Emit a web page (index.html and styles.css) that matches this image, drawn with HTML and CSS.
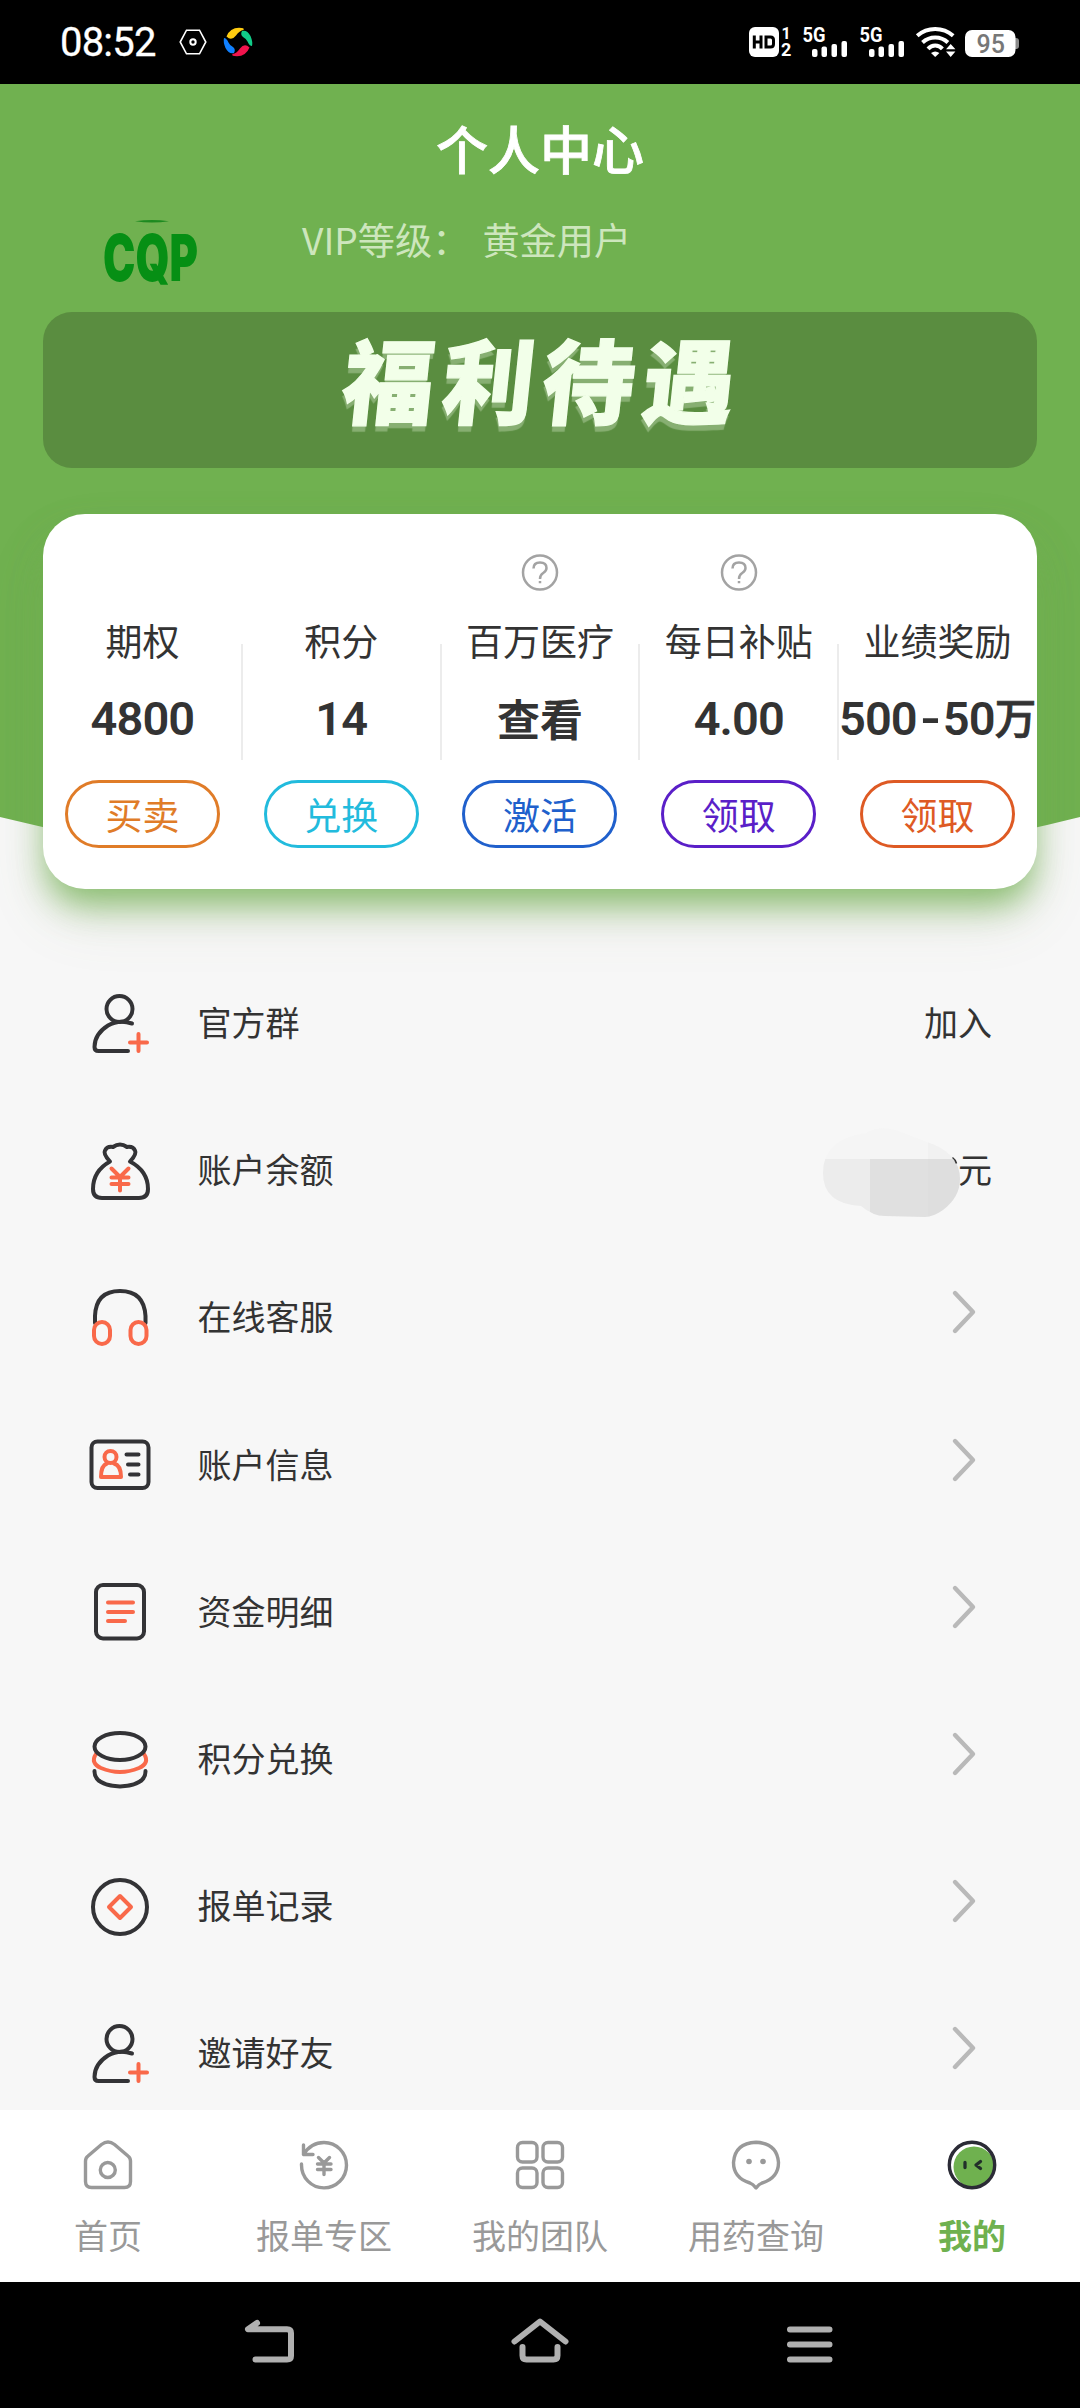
FILE: index.html
```html
<!DOCTYPE html>
<html lang="zh-CN">
<head>
<meta charset="utf-8">
<title>个人中心</title>
<link rel="stylesheet" href="styles.css">
</head>
<body>
<div class="phone">
  <div class="status">
    <span class="clock">08:52</span>
    <svg class="st-hex" width="28" height="26" viewBox="0 0 28 26" fill="none" stroke="#fff" stroke-width="1.6"><path d="M7.5 1.2h13L26.8 13l-6.3 11.8h-13L1.2 13z"/><circle cx="14" cy="13" r="2.7" stroke-width="2"/></svg>
    <svg class="st-swirl" width="30" height="30" viewBox="0 0 30 30"><path d="M3.500 9.500Q7 .8 16 .8q6 0 4.500 2.200-4 .5-7.500 5.500-4.500 6-9.500 1z" fill="#fc1"/><path d="M19 4q5-1.500 8.500 5 2.500 6 1.500 10-2.500 0-4.500-4.500-1-2.500-4.500-4.500-3-2.500-1-6z" fill="#1c8"/><path d="M26.500 20.500q-3.500 8.700-12.500 8.700-6 0-4.500-2.200 4-.5 7.500-5.500 4.500-6 9.500-1z" fill="#f1144d"/><path d="M11 26q-5 1.500-8.500-5Q0 15 1 11q2.500 0 4.500 4.500 1 2.500 4.500 4.500 3 2.500 1 6z" fill="#1080ff"/></svg>
    <span class="grow"></span>
    <svg class="st-hd" width="43" height="30" viewBox="0 0 43 30"><rect width="30" height="30" rx="6" fill="#fff"/><path d="M5.300 8.500v13M12 8.500v13M5.300 15H12M17 10h4.500q3 0 3 3v4q0 3-3 3H17z" fill="none" stroke="#000" stroke-width="3"/><text x="32.500" y="12" class="tiny">1</text><text x="32" y="29" class="small">2</text></svg>
    <svg class="st-sig" width="45" height="30" viewBox="0 0 45 30" fill="#fff"><text x="-.5" y="14.500" class="gen" textLength="23" lengthAdjust="spacingAndGlyphs">5G</text><rect x="9" y="22" width="5.500" height="8" rx="2"/><rect x="18.500" y="19.500" width="5.500" height="10.500" rx="2"/><rect x="28.500" y="17" width="5.500" height="13" rx="2"/><rect x="38.500" y="14" width="5.500" height="16" rx="2"/></svg>
    <svg class="st-sig2" width="45" height="30" viewBox="0 0 45 30" fill="#fff"><text x="-.5" y="14.500" class="gen" textLength="23" lengthAdjust="spacingAndGlyphs">5G</text><rect x="9" y="22" width="5.500" height="8" rx="2"/><rect x="18.500" y="19.500" width="5.500" height="10.500" rx="2"/><rect x="28.500" y="17" width="5.500" height="13" rx="2"/><rect x="38.500" y="14" width="5.500" height="16" rx="2"/></svg>
    <svg class="st-wifi" width="40" height="30" viewBox="0 0 40 30"><g fill="none" stroke="#fff" stroke-width="4"><path d="M1.200 8.800Q9 2 19.200 2t18 6.800"/><path d="M6.500 15.500Q12 10.500 19.200 10.500t12.700 5"/><path d="M12 21.800q3-3.300 7.200-3.300t7.200 3.300"/></g><path d="M15 26q4.200-3 8.400 0L19.200 30z" fill="#fff"/><path d="M30 22.300l4.700-5.300 4.700 5.300zM30 24.500l4.700 5.500 4.700-5.500z" fill="#fff"/></svg>
    <svg class="st-bat" width="55" height="27" viewBox="0 0 55 27"><rect x="46" y="8" width="8" height="11" rx="3" fill="#8a8a8a"/><rect width="50.500" height="27" rx="7" fill="#fff"/><text x="25.800" y="22.500" text-anchor="middle" class="pct">95</text></svg>
  </div>

  <main class="content">
    <h1 class="title">个人中心</h1>
    <div class="profile">
      <svg class="logo" width="100" height="74" viewBox="0 0 100 74"><path d="M32 9.200q17-2.600 34 0-17 2.600-34 0z" fill="#1d8a20"/><text x="0" y="69" class="logo-text" textLength="95" lengthAdjust="spacingAndGlyphs">CQP</text></svg>
      <p class="vip"><span>VIP等级：</span><span>黄金用户</span></p>
    </div>
    <div class="banner"><span>福利待遇</span></div>

    <section class="card">
      <div class="col">
        <div class="help"></div><div class="mid"><div class="label">期权</div><div class="value">4800</div></div><button class="pill orange">买卖</button>
      </div>
      <div class="col">
        <div class="help"></div><div class="mid"><div class="label">积分</div><div class="value">14</div></div><button class="pill cyan">兑换</button>
      </div>
      <div class="col">
        <div class="help"><svg width="38" height="38" viewBox="0 0 38 38" fill="none" stroke="#a3a3a3" stroke-width="2.500"><circle cx="19" cy="19.500" r="17"/><path d="M12.500 15.500q0-6 6.500-6t6.500 5.500q0 3-3.300 5Q19 22 19 26M19 28v2.300"/></svg></div><div class="mid"><div class="label">百万医疗</div><div class="value zh">查看</div></div><button class="pill blue">激活</button>
      </div>
      <div class="col">
        <div class="help"><svg width="38" height="38" viewBox="0 0 38 38" fill="none" stroke="#a3a3a3" stroke-width="2.500"><circle cx="19" cy="19.500" r="17"/><path d="M12.500 15.500q0-6 6.500-6t6.500 5.500q0 3-3.300 5Q19 22 19 26M19 28v2.300"/></svg></div><div class="mid"><div class="label">每日补贴</div><div class="value">4.00</div></div><button class="pill purple">领取</button>
      </div>
      <div class="col">
        <div class="help"></div><div class="mid"><div class="label">业绩奖励</div><div class="value">500<span class="dash">-</span>50<span class="wan">万</span></div></div><button class="pill red">领取</button>
      </div>
    </section>

    <ul class="menu">
      <li><svg class="ico" viewBox="0 0 64 64"><circle cx="31.500" cy="17" r="13"/><path d="M44 31.500Q31 27 20 33.500 6.500 42 6.500 55q0 4 4 4H40"/><path class="hot" d="M42 50.500h17M50.500 42v17"/></svg><span>官方群</span><em>加入</em></li>
      <li><svg class="ico" viewBox="0 0 64 64"><path d="M22 22.500Q15 15 17 11.500 19 7 25 8q7-5 14 0 6-1 8 3.500 2 3.500-5 11Q60 32 60 50q0 9-9 9H14q-9 0-9-9 0-18 17-27.500z"/><path class="hot" d="M23.500 29.500l8.500 8.500 8.500-8.500M23.500 38.500h17M23.500 45h17M32 38.500v13"/></svg><span>账户余额</span>
        <em class="balance">元<svg class="mask" width="138" height="92" viewBox="0 0 138 92"><clipPath id="blob"><path d="M0 46Q0 12 43 6 58-3 78 5L104 15Q137 26 137 52 137 70 120 83 110 90 102 90L62 89Q50 89 38 79 0 77 0 46z"/></clipPath><g clip-path="url(#blob)"><rect width="138" height="92" fill="#f5f5f5"/><path d="M0 32h47v60H0z" fill="#ececec"/><path d="M105 0h33v32h-33z" fill="#f1f1f1"/><path d="M47 32h58v60H47z" fill="#e0e0e0"/><path d="M105 32h33v60h-33z" fill="#dedede"/></g><path d="M129.500 30.500q3 2 4 6" fill="none" stroke="#333" stroke-width="1.500"/></svg></em></li>
      <li><svg class="ico" viewBox="0 0 64 64"><path d="M7 37V30Q8 5 32 5t25.500 25v7"/><rect class="hot" x="6" y="36" width="16" height="22" rx="8"/><rect class="hot" x="42.500" y="36" width="16" height="22" rx="8"/></svg><span>在线客服</span><svg class="chev" viewBox="0 0 26 46"><path d="M4 4l18 19L4 42"/></svg></li>
      <li><svg class="ico" viewBox="0 0 64 64"><rect x="3.500" y="8.500" width="57" height="46.500" rx="6"/><circle class="hot" cx="22.500" cy="24" r="6"/><path class="hot" d="M19 30.500q-6 2-6 13.500h20q0-11.500-7-13.500"/><path d="M38.500 21.500h12M40 31.500h10.500M42 41.500h8.500"/></svg><span>账户信息</span><svg class="chev" viewBox="0 0 26 46"><path d="M4 4l18 19L4 42"/></svg></li>
      <li><svg class="ico" viewBox="0 0 64 64"><rect x="8" y="5" width="48" height="53.500" rx="7"/><path class="hot" d="M20 22.500h25M20 32h25M20 41h17"/></svg><span>资金明细</span><svg class="chev" viewBox="0 0 26 46"><path d="M4 4l18 19L4 42"/></svg></li>
      <li><svg class="ico" viewBox="0 0 64 64"><path d="M6.500 43Q6 57 32 58.500 58 57 57.500 43"/><path class="hot" d="M8 26q-6 9 5 14 19 8 38 0 11-5 5-14"/><ellipse cx="32" cy="18.500" rx="25.500" ry="13.500"/></svg><span>积分兑换</span><svg class="chev" viewBox="0 0 26 46"><path d="M4 4l18 19L4 42"/></svg></li>
      <li><svg class="ico" viewBox="0 0 64 64"><circle cx="32" cy="32" r="27"/><path class="hot" d="M32 21l11 11-11 11-11-11z"/></svg><span>报单记录</span><svg class="chev" viewBox="0 0 26 46"><path d="M4 4l18 19L4 42"/></svg></li>
      <li><svg class="ico" viewBox="0 0 64 64"><circle cx="31.500" cy="17" r="13"/><path d="M44 31.500Q31 27 20 33.500 6.500 42 6.500 55q0 4 4 4H40"/><path class="hot" d="M42 50.500h17M50.500 42v17"/></svg><span>邀请好友</span><svg class="chev" viewBox="0 0 26 46"><path d="M4 4l18 19L4 42"/></svg></li>
    </ul>
  </main>

  <nav class="tabs">
    <a><svg viewBox="0 0 50 50"><path d="M2.500 21q0-3 2.500-5L18.500 4.500q6.500-5 13 0L45 16q2.500 2 2.500 5v20.500q0 6-6 6h-33q-6 0-6-6z"/><circle cx="24.800" cy="30" r="7.500"/></svg><span>首页</span></a>
    <a><svg viewBox="0 0 50 50"><path d="M4.500 14.500Q12 2.500 25 2.500A22.500 22.700 0 1 1 2.500 25v-1M4.500 5v9.500H14"/><path d="M19.500 17.500l5.500 5.500 5.500-5.500M18.500 24h13.500M18.500 29.500h13.500M25 24v10.500"/></svg><span>报单专区</span></a>
    <a><svg viewBox="0 0 50 50"><rect x="2.500" y="2.500" width="19.500" height="19.500" rx="5"/><rect x="28" y="2.500" width="19.500" height="19.500" rx="5"/><rect x="2.500" y="28" width="19.500" height="19.500" rx="5"/><rect x="28" y="28" width="19.500" height="19.500" rx="5"/></svg><span>我的团队</span></a>
    <a><svg viewBox="0 0 50 50"><path d="M19 43Q2.500 38 2.500 22.500 4 3 25 2.300 46 3 47.500 22.500 47.500 38 31 43q-3 1-6 5-3-4-6-5z"/><circle class="dot" cx="18" cy="21.500" r="2.800"/><circle class="dot" cx="32" cy="21.500" r="2.800"/></svg><span>用药查询</span></a>
    <a class="on"><svg viewBox="0 0 50 50"><circle cx="25" cy="25" r="22.500" fill="#fff" stroke="none"/><circle cx="27" cy="27" r="20.500" fill="#6fb14f" stroke="none"/><circle cx="25" cy="25" r="22.700" stroke="#2b2b36"/><path d="M18 22.500v5M33.500 21.500L29 25l4.500 3.500" stroke="#22302a" stroke-width="3.300"/></svg><span>我的</span></a>
  </nav>

  <div class="keys">
    <svg viewBox="0 0 60 50"><path d="M17 6L8 12.200H47Q51 12.200 51 16V39q0 3.500-4 3.500H15.500"/></svg>
    <svg viewBox="0 0 60 50"><path d="M4.500 24.500L30 4.500l25.500 20M12.500 30v8.500q0 4 4 4h27q4 0 4-4V30"/></svg>
    <svg viewBox="0 0 60 50"><path d="M10 12.500h39.500M10 27.500h39.500M10 42.500h39.500"/></svg>
  </div>
</div>
</body>
</html>
```
FILE: styles.css
```css
* { box-sizing: border-box; }
body, h1, p, ul { margin: 0; padding: 0; }
body { font-family: "Noto Sans CJK SC", Roboto, sans-serif; color: #333; background: #f7f7f7; }
svg { overflow: visible; }
.phone { width: 1080px; height: 2408px; display: flex; flex-direction: column; overflow: hidden; }

.status { height: 84px; flex: none; background: #000; display: flex; align-items: center; padding: 0 60px; }
.clock { font: 400 40px/84px Roboto, sans-serif; color: #fff; width: 119px; height: 82px; letter-spacing: -0.8px; -webkit-text-stroke: 0.3px #fff; }
.st-swirl { margin-left: 16px; }
.grow { flex: 1; }
.st-hd { margin-right: 11px; }
.st-sig { margin-right: 12px; }
.st-sig2 { margin-right: 11px; }
.st-wifi { margin-right: 9px; }
.st-bat { margin: 3px 0 0 0; }
.tiny { font: 700 16px Roboto, sans-serif; fill: #fff; }
.small { font: 700 18px Roboto, sans-serif; fill: #fff; }
.gen { font: 700 20px Roboto, sans-serif; }
.pct { font: 500 25px Roboto, sans-serif; fill: #777; }

.content { flex: 1; min-height: 0; overflow: hidden; position: relative; z-index: 0; }
.content::before { content: ""; position: absolute; z-index: -1; inset: 0 0 auto 0; height: 820px; background: #70b150; clip-path: path("M0 0H1080V733Q540 868 0 733Z"); }
.title { height: 128px; text-align: center; color: #fff; font-size: 52px; line-height: 128px; font-weight: 500; -webkit-text-stroke: 0.8px #fff; }
.profile { display: flex; height: 100px; padding-left: 103px; }
.logo { flex: none; }
.logo-text { font: 900 65px Inter, sans-serif; fill: #068f14; }
.vip { display: flex; gap: 13px; margin-left: 99px; font-size: 37.2px; line-height: 55px; color: #cde6bd; font-weight: 400; }
.banner { width: 994px; height: 156px; margin: 0 auto 46px; border-radius: 29px; background: #5a8d40; display: flex; justify-content: center; }
.banner span { font-size: 92px; line-height: 130px; font-weight: 900; letter-spacing: 8px; padding-left: 4px; color: #f2ffe9; transform: skewX(-6deg); -webkit-text-stroke: 1.3px #f2ffe9; text-shadow: 0 6px 1px rgba(242, 255, 233, .3); }

.card { width: 994px; height: 375px; margin: 0 auto; background: #fff; border-radius: 42px; display: grid; grid-template-columns: repeat(5, minmax(0, 1fr)); box-shadow: 0 20px 34px -4px rgba(112, 177, 80, .8), 0 30px 60px rgba(120, 130, 90, .12); }
.col { display: flex; flex-direction: column; align-items: center; padding-top: 39px; position: relative; }
.col:not(:last-child)::after { content: ""; position: absolute; right: -1px; top: 130px; width: 2px; height: 116px; background: #ececec; }
.help { height: 38px; }
.help svg { display: block; }
.mid { height: 189px; display: flex; flex-direction: column; align-items: center; padding-top: 22px; }
.label { font-size: 37px; line-height: 54px; white-space: nowrap; font-weight: 400; }
.value { margin-top: 25px; font: 600 47px/54px Roboto, "Noto Sans CJK SC", sans-serif; letter-spacing: -0.9px; white-space: nowrap; display: flex; height: 54px; }
.value.zh, .wan { font-family: "Noto Sans CJK SC", sans-serif; font-size: 43px; line-height: 50px; font-weight: 700; letter-spacing: 0; }
.wan { font-weight: 500; font-size: 41.500px; line-height: 48px; -webkit-text-stroke: 0.8px #333; }
.dash { width: 26px; text-align: center; transform: scaleX(1.2); }
.pill { width: 155px; height: 68px; border: 3px solid; border-radius: 34px; background: #fff; font: 400 37px/54px "Noto Sans CJK SC", sans-serif; padding: 0 0 1px; }
.orange { color: #e07c28; }
.cyan { color: #22bbdd; }
.blue { color: #2060cc; }
.purple { color: #5a1fc8; }
.red { color: #de5a24; }

.menu { list-style: none; padding: 61px 88px 0; }
.menu li { height: 147.2px; display: flex; align-items: center; font-size: 34px; line-height: 50px; font-weight: 400; }
.menu li > span { margin: -3px 0 0 45.500px; flex: 1; }
.menu em { font-style: normal; margin-top: -3px; }
.ico { width: 64px; height: 64px; flex: none; fill: none; stroke: #333336; stroke-width: 4; stroke-linecap: round; stroke-linejoin: round; }
.hot { stroke: #f9694a; }
.chev { width: 26px; height: 46px; margin: -11px 15px 0 0; fill: none; stroke: #b9b9b9; stroke-width: 4.400; stroke-linecap: round; stroke-linejoin: round; }
.balance { position: relative; }
.mask { position: absolute; right: 31px; top: -17px; }

.tabs { height: 172px; flex: none; background: #fff; display: grid; grid-template-columns: repeat(5, 1fr); }
.tabs a { display: flex; flex-direction: column; align-items: center; padding-top: 30px; color: #999; font-size: 34px; line-height: 50px; font-weight: 400; }
.tabs svg { width: 50px; height: 50px; margin-bottom: 20px; fill: none; stroke: #999; stroke-width: 3.400; stroke-linecap: round; stroke-linejoin: round; }
.tabs .dot { fill: #999; stroke: none; }
.tabs .on { color: #6fb14f; font-weight: 700; }

.keys { height: 126px; flex: none; background: #000; display: flex; justify-content: center; gap: 210px; padding-top: 35px; }
.keys svg { width: 60px; height: 50px; fill: none; stroke: #b0b0b0; stroke-width: 6; stroke-linecap: round; stroke-linejoin: round; }
```
